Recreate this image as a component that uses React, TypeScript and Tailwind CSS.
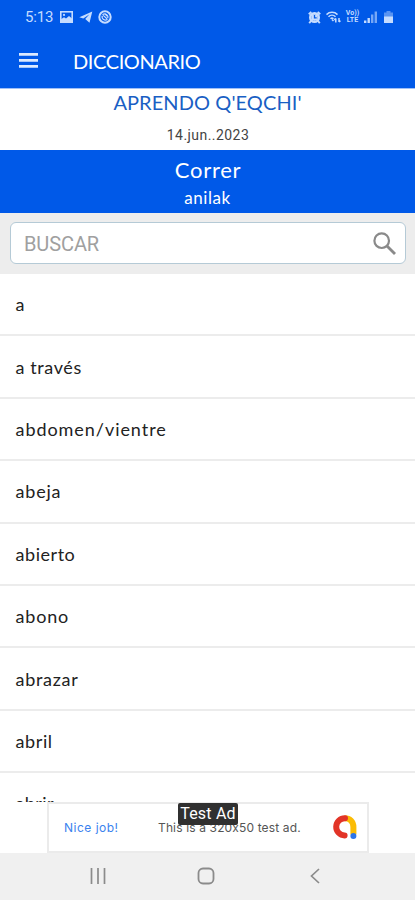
const words = [
  { text: "a", tracking: "" },
  { text: "a través", tracking: "tracking-[0.6px]" },
  { text: "abdomen/vientre", tracking: "tracking-[0.95px]" },
  { text: "abeja", tracking: "tracking-[0.8px]" },
  { text: "abierto", tracking: "tracking-[0.55px]" },
  { text: "abono", tracking: "tracking-[0.8px]" },
  { text: "abrazar", tracking: "tracking-[0.7px]" },
  { text: "abril", tracking: "tracking-[0.6px]" },
  { text: "abrir", tracking: "tracking-[0.4px]" },
];

function StatusBar() {
  return (
    <div className="flex h-[34px] items-center justify-between pl-[25px] pr-[22px] text-[#c5dcff]">
      <div className="flex items-center">
        <span className="w-[35px] font-['Roboto',sans-serif] text-[15px] tracking-[-0.2px]">5:13</span>
        <svg className="h-3 w-[13px]" viewBox="0 0 13 12" fill="none" stroke="currentColor" strokeWidth="1.6">
          <rect x="0.8" y="0.8" width="11.4" height="10.4" />
          <path d="M1 11V8.2l3-2 2 1.3L9 5l3 2.5V11z" fill="currentColor" stroke="none" />
          <circle cx="4" cy="3.9" r="1.1" fill="currentColor" stroke="none" />
        </svg>
        <svg className="ml-[6px] h-3 w-[14px]" viewBox="0 0 14 12" fill="currentColor">
          <path d="M13.3.4.3 6.3l4 1.2L10.5 3.3 6.2 8l4.3 3.7z" />
        </svg>
        <svg className="ml-[5px] h-[14px] w-[14px]" viewBox="0 0 14 14" fill="none" stroke="currentColor">
          <circle cx="7" cy="7" r="5.7" strokeWidth="2" />
          <path d="M4.3 5.8a3.2 3.2 0 0 0 5.2 3.4M9.7 8.2a3.2 3.2 0 0 0-5.2-3.4" strokeWidth="1.2" />
          <path d="M5.2 5.4 9 8.8M7 4l2.4 2.2" strokeWidth="1.2" />
        </svg>
      </div>
      <div className="flex items-center">
        <svg className="h-[13px] w-[13px]" viewBox="0 0 13 13" fill="none" stroke="currentColor">
          <circle cx="6.5" cy="6.5" r="4.3" strokeWidth="2.4" />
          <circle cx="6.5" cy="6.5" r="3.2" fill="currentColor" stroke="none" />
          <path d="M.8 3.2 3.3.9M12.2 3.2 9.7.9M3 10l-1.8 2.2M10 10l1.8 2.2" strokeWidth="1.9" />
          <path d="M6.5 4v2.8h2.2" stroke="#0059e8" strokeWidth="1.3" />
        </svg>
        <svg className="ml-[5px] h-3 w-[15px]" viewBox="0 0 15 12" fill="none" stroke="currentColor" strokeWidth="1.5">
          <path d="M.5 3.6C3.5.6 8.5.6 11.5 3.6M2.5 5.8c2-2 5-2 7 0M4.5 7.8c1-.9 2-.9 3 0" />
          <path d="M6 8.4 7.5 10M9.8 11.5V7.4m-1.5 1.5 1.5-1.5M13 7v4m1.4-1.4L13 11" />
        </svg>
        <div className="ml-[5px] flex w-[13px] flex-col items-center font-['Roboto',sans-serif] text-[7px] font-bold leading-[7px]">
          <span>Vo))</span>
          <span>LTE</span>
        </div>
        <svg className="ml-[5px] h-3 w-[13px]" viewBox="0 0 13 12" fill="currentColor">
          <path d="M0 9.5h2.4V12H0zM3.5 7h2.4v5H3.5z" />
          <path d="M7 3.5h2.4V12H7zM10.6.5H13V12h-2.4z" opacity=".6" />
        </svg>
        <svg className="ml-[7px] h-3 w-[9px]" viewBox="0 0 9 12" fill="currentColor">
          <path d="M2.5 0h4v1.5H9V6H0V1.5h2.5z" opacity=".45" />
          <path d="M0 5.5h9V12H0z" />
        </svg>
      </div>
    </div>
  );
}

function AdBanner() {
  return (
    <div className="flex h-[51px] shrink-0 justify-center pl-[1px]">
      <div className="relative flex w-[322px] items-center border-2 border-[#ebebeb] bg-white font-['Inter',sans-serif] text-[12px]">
        <span className="ml-[15px] w-[94px] tracking-[0.5px] text-[#3b82ee]">Nice job!</span>
        <span className="whitespace-nowrap tracking-[0.14px] text-[#555] [font-feature-settings:'calt'_0]">This is a 320x50 test ad.</span>
        <svg className="absolute left-[283px] top-[10px] h-[26px] w-[26px]" viewBox="0 0 26 26" fill="none" strokeWidth="6">
          <path d="M12.5 4.2c5.5 0 8.9 3.4 8.9 8.8v7.5" stroke="#fbbc04" />
          <path d="M12.6 21.4A8.6 8.6 0 1 1 13 4.2" stroke="#e23427" strokeLinecap="round" />
          <circle cx="21.4" cy="22" r="3" fill="#2d75e8" />
        </svg>
        <span className="absolute left-[129px] top-[-1px] h-[22px] w-[60px] rounded-[2px] bg-[#303030] text-center font-['Roboto',sans-serif] text-[16px] leading-[22px] tracking-[0.2px] text-white">
          Test Ad
        </span>
      </div>
    </div>
  );
}

function NavigationBar() {
  return (
    <nav className="flex h-[47px] shrink-0 items-center bg-[#f0f0f0] pb-[2px] pl-[90px] text-[#8b8b8b]">
      <svg className="h-4 w-4" viewBox="0 0 16 16" stroke="currentColor" strokeWidth="1.7">
        <path d="M1.5 0v16M8 0v16M14.5 0v16" />
      </svg>
      <svg className="ml-[91px] h-[18px] w-[18px]" viewBox="0 0 18 18" fill="none" stroke="currentColor" strokeWidth="1.8">
        <rect x="1.5" y="1.5" width="15" height="15" rx="4.5" />
      </svg>
      <svg className="ml-[95px] h-4 w-[10px]" viewBox="0 0 10 16" fill="none" stroke="currentColor" strokeWidth="1.7">
        <path d="M9 1 1.5 8 9 15" />
      </svg>
    </nav>
  );
}

export default function App() {
  return (
    <div className="flex h-[900px] w-[415px] flex-col overflow-hidden bg-white font-['Lato',sans-serif]">
      <header className="h-[88px] shrink-0 bg-[#0059e8] text-white">
        <StatusBar />
        <div className="flex h-[53px] items-center pl-[19px]">
          <svg className="h-[15px] w-[19px]" viewBox="0 0 19 15" fill="#dceaff">
            <path d="M0 0h19v2.8H0zM0 6h19v2.8H0zM0 12h19v2.8H0z" />
          </svg>
          <h1 className="ml-[35px] text-[20px] tracking-[-0.4px]">DICCIONARIO</h1>
        </div>
      </header>
      <section className="h-[62px] shrink-0 border-t border-[#9fc0f8] text-center">
        <h2 className="h-[28px] text-[20px] leading-[27px] tracking-[0.08px] text-[#1a5fc4]">APRENDO Q'EQCHI'</h2>
        <p className="mt-[8px] pl-[1px] font-['Roboto',sans-serif] text-[14px] leading-[20px] tracking-[0.45px] text-[#444]">14.jun..2023</p>
      </section>
      <section className="h-[63px] shrink-0 bg-[#0059e8] text-center text-white">
        <p className="pt-[5px] pl-px text-[22px] leading-[30px] tracking-[0.7px]">Correr</p>
        <p className="text-[17px] leading-[26px] tracking-[0.6px]">anilak</p>
      </section>
      <div className="h-[61px] shrink-0 bg-[#ededed] pl-[10px] pr-[9px] pt-[9px]">
        <div className="flex h-[42px] items-center justify-between rounded-[6px] border border-[#b5cad6] bg-white pl-[13px] pr-[9px]">
          <span className="pt-px font-['Roboto',sans-serif] text-[20px] tracking-[-0.1px] text-[#a0a0a0]">BUSCAR</span>
          <svg className="h-[23px] w-[23px]" viewBox="0 0 23 23" fill="none" stroke="#8a8a8a" strokeWidth="2.2">
            <circle cx="8.7" cy="8.7" r="7.3" />
            <path d="m14 14 8 8" strokeWidth="2.8" />
          </svg>
        </div>
      </div>
      <ul className="min-h-0 flex-1 overflow-hidden text-[18px] text-[#222]">
        {words.map((word) => (
          <li key={word.text} className={`flex h-[62.4px] items-center border-b-2 border-[#ececec] pl-[15.5px] pt-px ${word.tracking}`}>
            {word.text}
          </li>
        ))}
      </ul>
      <AdBanner />
      <NavigationBar />
    </div>
  );
}
